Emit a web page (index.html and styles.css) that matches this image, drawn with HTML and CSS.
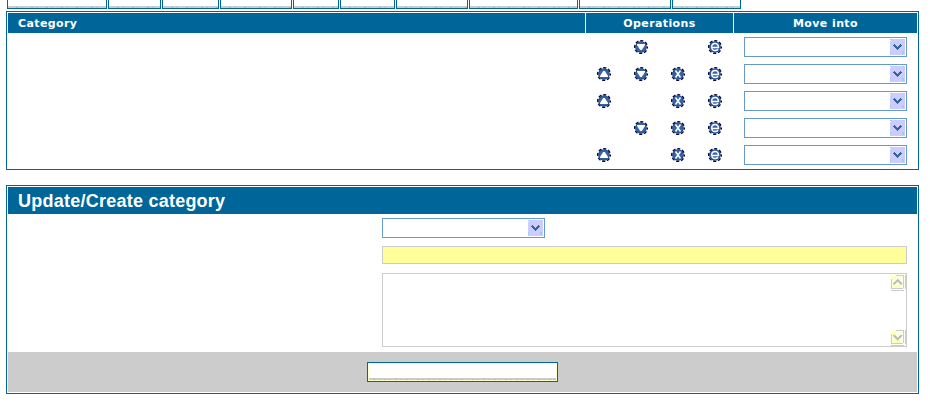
FILE: index.html
```html
<!DOCTYPE html>
<html lang="en">
<head>
<meta charset="utf-8">
<title>Categories</title>
<link rel="stylesheet" href="styles.css">
</head>
<body>
<svg class="defs" aria-hidden="true">
  <defs>
    <g id="disc">
      <circle cx="7" cy="7" r="6.3" fill="none" stroke="#080840" stroke-width="1.5" stroke-dasharray="3.1 1.848" stroke-dashoffset="1.5"/>
      <circle cx="7" cy="7" r="5.8" fill="#1c3f7a"/>
      <circle cx="7" cy="7" r="5.1" fill="#3464a6"/>
    </g>
    <symbol id="down" viewBox="0 0 14 14"><use href="#disc"/><path d="M3 4h8v1L7.800 10H6.200L3 5z" fill="#fff"/></symbol>
    <symbol id="up" viewBox="0 0 14 14"><use href="#disc"/><path d="M3 10h8V9L7.800 4H6.200L3 9z" fill="#fff"/></symbol>
    <symbol id="delete" viewBox="0 0 14 14"><use href="#disc"/><path d="M4.500 3.500l5 7M9.500 3.500l-5 7" stroke="#fff" stroke-width="1.500"/></symbol>
    <symbol id="edit" viewBox="0 0 14 14"><use href="#disc"/><path d="M4 7.500h6.500C10.400 4.900 9 3.500 7.100 3.500S3.700 5 3.700 7s1.400 3.500 3.400 3.500c1.400 0 2.300-.5 3-1.300" fill="none" stroke="#fff" stroke-width="1.300"/></symbol>
    <symbol id="arrow" viewBox="0 0 15 16" shape-rendering="crispEdges">
      <path d="M0 0h15v16H0z" fill="#ccf"/>
      <path d="M0 0h2v1H1v1H0zM13 0h1v1h-1zM0 12h1v3H0zM12 12h2v3h-2z" fill="#9cf"/>
      <path d="M0 1h1v1H0z" fill="#fff"/>
      <path d="M4 5h1v1h1v1h1v1h1V7h1V6h1V5h1v1h1v1h-1v1h-1v1H9v1H8v1H7v-1H6V9H5V8H4V7H3V6h1z" fill="#369"/>
    </symbol>
    <symbol id="scroll" viewBox="0 0 16 17" shape-rendering="crispEdges">
      <path d="M0 0h16v17H0z" fill="#fffff0"/>
      <path d="M2 2h11v12H2z" fill="#ffffe0"/>
      <path d="M2 3h4v3H2zM4 11h6v3H4z" fill="#ffffb0"/>
      <path d="M6 1h8v1H6zM1 5h1v10H1zM13 2h1v12h-1zM2 14h11v1H2zM15 1h1v14h-1zM1 16h13v1H1z" fill="#ccc"/>
      <path d="M2 1h4v1H2zM1 2h1v3H1zM12 3h1v11h-1z" fill="#fff"/>
    </symbol>
  </defs>
</svg>

<nav class="tabs">
  <span class="tab t1"></span><span class="tab t2"></span><span class="tab t3"></span><span class="tab t4"></span><span class="tab t5"></span><span class="tab t6"></span><span class="tab t7"></span><span class="tab t8"></span><span class="tab t9"></span><span class="tab t10"></span>
</nav>

<section class="panel list">
  <div class="head">
    <div class="name">Category</div>
    <div class="ops-title">Operations</div>
    <div class="move-title">Move into</div>
  </div>
  <div class="row">
    <div class="ops"><i></i><svg><use href="#down"/></svg><i></i><svg><use href="#edit"/></svg></div>
    <div class="select"><svg><use href="#arrow"/></svg></div>
  </div>
  <div class="row">
    <div class="ops"><svg><use href="#up"/></svg><svg><use href="#down"/></svg><svg><use href="#delete"/></svg><svg><use href="#edit"/></svg></div>
    <div class="select"><svg><use href="#arrow"/></svg></div>
  </div>
  <div class="row">
    <div class="ops"><svg><use href="#up"/></svg><i></i><svg><use href="#delete"/></svg><svg><use href="#edit"/></svg></div>
    <div class="select"><svg><use href="#arrow"/></svg></div>
  </div>
  <div class="row">
    <div class="ops"><i></i><svg><use href="#down"/></svg><svg><use href="#delete"/></svg><svg><use href="#edit"/></svg></div>
    <div class="select"><svg><use href="#arrow"/></svg></div>
  </div>
  <div class="row">
    <div class="ops"><svg><use href="#up"/></svg><i></i><svg><use href="#delete"/></svg><svg><use href="#edit"/></svg></div>
    <div class="select"><svg><use href="#arrow"/></svg></div>
  </div>
</section>

<section class="panel form">
  <h2>Update/Create category</h2>
  <div class="fields">
    <div class="select"><svg><use href="#arrow"/></svg></div>
    <div class="input"></div>
    <div class="textarea">
      <svg viewBox="0 0 16 17" shape-rendering="crispEdges"><use href="#scroll"/><path d="M7 5h1v1h1v1h1v1h1v1h1v1h-2V9H9V8H8V7H7v1H6v1H5v1H3V9h1V8h1V7h1V6h1z" fill="#bbb" stroke="#bbb" stroke-width=".5"/></svg>
      <svg viewBox="0 0 16 17" shape-rendering="crispEdges"><use href="#scroll"/><path d="M3 6h2v1h1v1h1v1h1V8h1V7h1V6h2v1h-1v1h-1v1H9v1H8v1H7v-1H6V9H5V8H4V7H3z" fill="#bbb" stroke="#bbb" stroke-width=".5"/></svg>
    </div>
  </div>
  <div class="footer"><div class="submit"></div></div>
</section>
</body>
</html>
```
FILE: styles.css
```css
* { box-sizing: border-box; }
body { margin: 0; background: #fff; }
svg { display: block; }
.defs { position: absolute; width: 0; height: 0; }

.tabs { display: flex; gap: 1px; height: 9px; padding-left: 7px; }
.tab {
  border: solid #069;
  border-width: 0 1px 1px;
  background:
    repeating-linear-gradient(90deg, transparent 0 8px, #c5adc5 8px 10px, transparent 10px 13px, #b5c5c5 13px 15px) 0 100% / 100% 1px no-repeat,
    linear-gradient(#ccc, #ccc) 0 100% / 100% 2px no-repeat;
}
.t1 { width: 100px; }
.t2 { width: 53px; }
.t3 { width: 57px; }
.t4 { width: 72px; }
.t5 { width: 46px; }
.t6 { width: 55px; }
.t7 { width: 72px; }
.t8 { width: 109px; }
.t9 { width: 92px; }
.t10 { width: 69px; }

.panel { width: 913px; margin-left: 6px; padding: 1px; border: 1px solid #069; }
.list { height: 159px; margin-top: 2px; }
.form { height: 209px; margin-top: 15px; }

.head {
  display: grid;
  grid-template-columns: 577px 147px 183px;
  gap: 1px;
  height: 20px;
  background: #fff;
  color: #fff;
  font: bold 11px/22px "DejaVu Sans", Verdana, sans-serif;
  letter-spacing: .4px;
  text-align: center;
}
.head div { height: 20px; background: #069; }
.head .name { padding-left: 10px; text-align: left; }

.row { display: flex; justify-content: flex-end; align-items: center; height: 27px; padding-right: 10px; }
.ops { display: grid; grid-template-columns: repeat(4, 14px); gap: 23px; width: 125px; margin-right: 22px; }
.ops svg { width: 14px; height: 14px; }

.select {
  display: flex;
  justify-content: flex-end;
  width: 163px;
  height: 20px;
  padding: 1px;
  border: 1px solid #69c;
}
.select svg { width: 15px; height: 16px; }

h2 {
  height: 27px;
  margin: 0;
  padding-left: 10px;
  background: #069;
  color: #fff;
  font: bold 18px/28px "Liberation Sans", Arial, sans-serif;
  letter-spacing: .24px;
}
.fields { height: 138px; padding: 4px 10px 0 374px; }
.input { height: 18px; margin-top: 8px; border: 1px solid #ccc; background: #ff9; }
.textarea {
  display: flex;
  flex-direction: column;
  justify-content: space-between;
  align-items: flex-end;
  height: 74px;
  margin-top: 9px;
  border: 1px solid #ccc;
}
.textarea svg { width: 16px; height: 17px; }

.footer { display: flex; justify-content: center; height: 40px; padding-top: 10px; background: #ccc; }
.submit {
  width: 191px;
  height: 20px;
  border: 1px solid #069;
  box-shadow: inset 0 0 0 1px #ffc;
  background:
    repeating-linear-gradient(90deg, transparent 0 4px, #c5adc5 4px 6px, transparent 6px 9px, #b5c5c5 9px 11px) 1px 16px / 187px 1px no-repeat,
    linear-gradient(#ccc, #ccc) 1px 15px / 187px 2px no-repeat,
    #fff;
}
```
